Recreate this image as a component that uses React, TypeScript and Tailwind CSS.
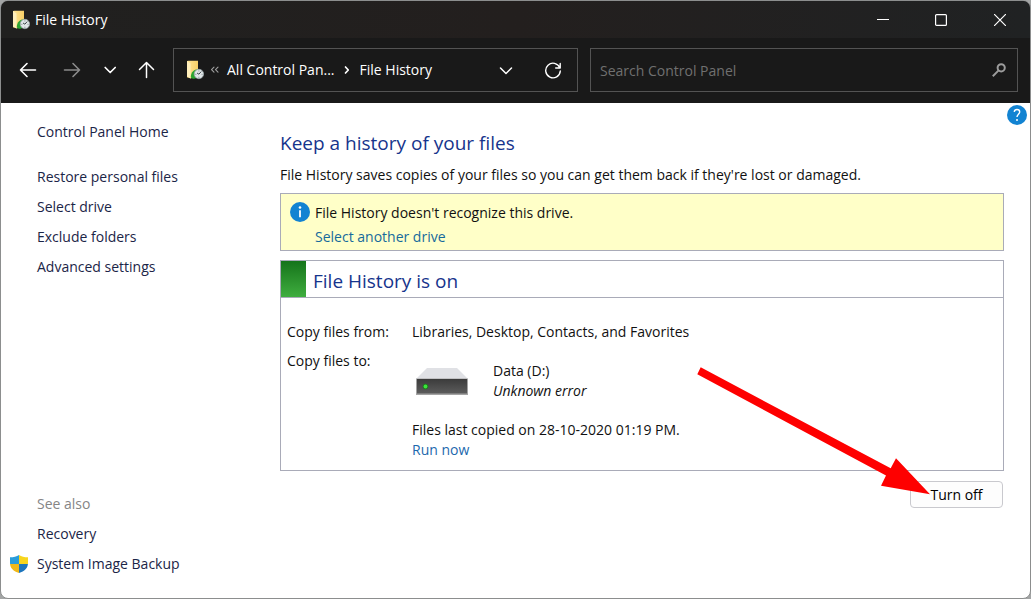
import type { ReactNode } from 'react';

function FolderHistoryIcon() {
  return (
    <svg viewBox="0 0 18 20" className="h-5 w-[18px] shrink-0" aria-hidden="true">
      <defs>
        <linearGradient id="folder" x1="0" y1="0" x2="1" y2="0">
          <stop offset="0" stopColor="#ffe597" />
          <stop offset="1" stopColor="#f7cf66" />
        </linearGradient>
      </defs>
      <path d="M1 1h3v16.500H1z" fill="#f3c95c" />
      <path d="M2.500 .8H12v15L4.500 18.500 1 16.500V1z" fill="url(#folder)" />
      <path d="M1 1 4.500 3.500v15L1 16.500z" fill="#ffefbb" />
      <path d="M4.800 17.200c0-5 2.800-8 7.700-8l-.7 3-2.200 6.400c-2 .4-3.800.1-4.800-1.400z" fill="#2ba52f" />
      <circle cx="12.900" cy="14" r="4.700" fill="#dfe5e7" stroke="#98a3a7" strokeWidth=".8" />
      <path d="M12.900 14.200 15.200 11.600M12.900 14.200 11 13" stroke="#3d464a" strokeWidth="1" fill="none" />
      <path d="M12.900 10.500v.9M12.900 16.800v.9M9.400 14.300h.9M15.600 14.300h.9" stroke="#59666c" strokeWidth=".8" />
    </svg>
  );
}

function ShieldIcon() {
  return (
    <svg viewBox="0 0 18 18" className="h-[18px] w-[18px] shrink-0" aria-hidden="true">
      <defs>
        <clipPath id="shield">
          <path d="M9 0c2.400 1.600 5.400 2.300 9 2.300V8c0 5-3.500 8.500-9 10C3.500 16.500 0 13 0 8V2.300C3.600 2.300 6.600 1.600 9 0z" />
        </clipPath>
      </defs>
      <g clipPath="url(#shield)">
        <path d="M0 0h9v9H0z" fill="#2a9ddb" />
        <path d="M9 0h9v9H9z" fill="#f7d51d" />
        <path d="M0 9h9v9H0z" fill="#f0b91b" />
        <path d="M9 9h9v9H9z" fill="#1c75bd" />
      </g>
    </svg>
  );
}

function DriveIcon() {
  return (
    <svg viewBox="0 0 52 28" className="h-7 w-[52px] shrink-0" aria-hidden="true">
      <defs>
        <linearGradient id="front" x1="0" y1="0" x2="0" y2="1">
          <stop offset="0" stopColor="#3b3b3b" />
          <stop offset="1" stopColor="#5c5c5c" />
        </linearGradient>
      </defs>
      <path d="M11 1h30l11 11H0z" fill="#e0e1e5" />
      <path d="M0 11.500h52V28H0z" fill="#a3a3a3" />
      <path d="M1 12h50v14.500H1z" fill="url(#front)" />
      <circle cx="9.500" cy="19.500" r="2.800" fill="#1d7a1d" />
      <circle cx="9.500" cy="19.500" r="1.900" fill="#3be53b" />
    </svg>
  );
}

function Stroke({ d, className, width = 1.5 }: { d: string; className: string; width?: number }) {
  return (
    <svg viewBox="0 0 18 18" className={className} fill="none" stroke="currentColor" strokeWidth={width} strokeLinecap="round" strokeLinejoin="round" aria-hidden="true">
      <path d={d} />
    </svg>
  );
}

function IconButton({ label, className, children }: { label: string; className: string; children: ReactNode }) {
  return (
    <button type="button" aria-label={label} className={`flex shrink-0 items-center justify-center ${className}`}>
      {children}
    </button>
  );
}

function TitleBar() {
  return (
    <header className="flex h-[37px] shrink-0 items-center bg-[#212121] bg-linear-to-r from-[#20201f] via-[#231f1e] to-[#202223] pl-[11px] text-white">
      <FolderHistoryIcon />
      <h1 className="ml-[5px] flex-1 text-[14px] leading-5">File History</h1>
      <IconButton label="Minimize" className="h-full w-[58px]">
        <svg viewBox="0 0 12 12" className="size-3" stroke="currentColor" aria-hidden="true"><path d="M0 5.500h12" /></svg>
      </IconButton>
      <IconButton label="Maximize" className="h-full w-[58px]">
        <svg viewBox="0 0 12 12" className="size-3" fill="none" stroke="currentColor" strokeWidth="1.200" aria-hidden="true"><rect x=".6" y=".6" width="10.800" height="10.800" rx="1" /></svg>
      </IconButton>
      <IconButton label="Close" className="h-full w-[60px]">
        <svg viewBox="0 0 12 12" className="size-3" stroke="currentColor" strokeWidth="1.200" aria-hidden="true"><path d="m0 0 12 12M12 0 0 12" /></svg>
      </IconButton>
    </header>
  );
}

function Toolbar() {
  return (
    <div className="flex shrink-0 items-center bg-[#191919] px-3 pt-[10px] pb-[11px] text-white">
      <nav aria-label="Navigation" className="flex w-40 shrink-0 items-center">
        <IconButton label="Back" className="h-8 w-[30px]">
          <Stroke d="M16.500 9h-15M8 2.500 1.500 9 8 15.500" className="size-[18px]" width={1.600} />
        </IconButton>
        <IconButton label="Forward" className="ml-[14px] h-8 w-[30px] text-[#8b8b8b]">
          <Stroke d="M1.500 9h15M10 2.500 16.500 9 10 15.500" className="size-[18px]" width={1.600} />
        </IconButton>
        <IconButton label="Recent locations" className="ml-[10px] h-8 w-[26px]">
          <Stroke d="M4.200 6.500 9.200 11.500 14.200 6.500" className="size-[18px]" width={1.700} />
        </IconButton>
        <IconButton label="Up" className="ml-2 h-8 w-[30px]">
          <Stroke d="M9.500 16.500v-15M2.500 8.500l7-7 7 7" className="size-[18px]" />
        </IconButton>
      </nav>
      <div className="flex h-11 w-[405px] shrink items-center border border-[#535353] pl-3 text-[14px] leading-5">
        <FolderHistoryIcon />
        <Stroke d="M8 6.200 5.500 8.700 8 11.200M12 6.200 9.500 8.700 12 11.200" className="ml-[2px] size-[18px] text-[#a0a0a0]" width={1.100} />
        <a href="#all" className="ml-[3px] whitespace-nowrap">All Control Pan...</a>
        <Stroke d="M7.500 6 10.300 9 7.500 12" className="ml-[3px] size-[18px]" width={1.700} />
        <a href="#history" className="ml-[4px] flex-1 whitespace-nowrap">File History</a>
        <IconButton label="Previous locations" className="h-8 w-8">
          <Stroke d="M3.500 7 9 12.500 14.500 7" className="size-[18px]" />
        </IconButton>
        <IconButton label="Refresh" className="mr-2 ml-[15px] h-8 w-8">
          <Stroke d="M15.800 6.800A7.300 7.300 0 1 0 16.300 10M16.200 2.500v4.500h-4.500" className="size-[18px]" width={1.400} />
        </IconButton>
      </div>
      <label className="ml-3 flex h-11 min-w-0 flex-1 items-center border border-[#535353] pr-[11px] pl-[9px]">
        <input type="text" aria-label="Search Control Panel" placeholder="Search Control Panel" className="min-w-0 flex-1 bg-transparent pt-px text-[14px] leading-5 outline-none placeholder:text-[#707070]" />
        <svg viewBox="0 0 14 14" className="size-[14px] text-[#9c9c9c]" fill="none" stroke="currentColor" strokeWidth="2" aria-hidden="true">
          <circle cx="9.200" cy="4.800" r="3.600" />
          <path d="M6.600 7.400.8 13.200" />
        </svg>
      </label>
    </div>
  );
}

function SideLink({ children }: { children: ReactNode }) {
  return <a href="#task" className="block hover:underline">{children}</a>;
}

function Sidebar() {
  return (
    <aside className="flex w-[243px] shrink-0 flex-col pt-[14px] pb-[19px] pl-9 text-[14px] leading-[30px] text-[#1b2547]">
      <SideLink>Control Panel Home</SideLink>
      <nav aria-label="Tasks" className="mt-[15px]">
        <SideLink>Restore personal files</SideLink>
        <SideLink>Select drive</SideLink>
        <SideLink>Exclude folders</SideLink>
        <SideLink>Advanced settings</SideLink>
      </nav>
      <nav aria-label="See also" className="mt-auto">
        <h2 className="text-[#858585]">See also</h2>
        <SideLink>Recovery</SideLink>
        <div className="-ml-[27px] flex items-center gap-[9px]">
          <ShieldIcon />
          <SideLink>System Image Backup</SideLink>
        </div>
      </nav>
    </aside>
  );
}

function Notice() {
  return (
    <section className="mt-2 flex gap-[5px] border border-[#a9abb8] bg-[#ffffc8] pt-[7px] pb-px pl-[9px]">
      <svg viewBox="0 0 20 20" className="mt-px size-5 shrink-0" aria-hidden="true">
        <circle cx="10" cy="10" r="10" fill="#1283d2" />
        <circle cx="10" cy="5.500" r="1.300" fill="#fff" />
        <path d="M10 8.300v6.900" stroke="#fff" strokeWidth="1.800" />
      </svg>
      <div className="leading-6">
        <p>File History doesn't recognize this drive.</p>
        <a href="#select" className="text-[#166a9c] hover:underline">Select another drive</a>
      </div>
    </section>
  );
}

function StatusPanel() {
  return (
    <section className="mt-[9px] border border-[#a9abb8]">
      <div className="flex h-[37px] items-center border-b border-[#a9abb8]">
        <span className="h-full w-[25px] bg-linear-to-b from-[#14741a] to-[#3fae3f]" />
        <h3 className="ml-[7px] pt-1 text-[19px] leading-7 text-[#16348c]">File History is on</h3>
      </div>
      <dl className="grid grid-cols-[125px_1fr] gap-y-[9px] pt-6 pb-[10px] pl-[6px]">
        <dt>Copy files from:</dt>
        <dd>Libraries, Desktop, Contacts, and Favorites</dd>
        <dt>Copy files to:</dt>
        <dd>
          <div className="flex items-center gap-[25px] pt-[10px] pl-1">
            <DriveIcon />
            <div>
              <p>Data (D:)</p>
              <p className="italic">Unknown error</p>
            </div>
          </div>
          <p className="mt-[19px]">Files last copied on 28-10-2020 01:19 PM.</p>
          <a href="#run" className="block text-[#1c68ad] hover:underline">Run now</a>
        </dd>
      </dl>
    </section>
  );
}

function TurnOff() {
  return (
    <div className="relative mt-[10px] mr-px self-end">
      <button type="button" className="block h-[27px] w-[93px] rounded border border-[#c9c9ce] bg-[#fdfdfd] leading-5 text-black">Turn off</button>
      <svg viewBox="0 0 234 130" className="pointer-events-none absolute right-[73px] bottom-3 h-[130px] w-[234px]" aria-hidden="true">
        <path d="M4.700 1.300 194.700 102.300 200 92.300 234 128.300 185 119.700 190 109.500 1.300 8.300z" fill="#fe0000" />
      </svg>
    </div>
  );
}

export default function App() {
  return (
    <div className="min-h-screen bg-[#a3a5a5] font-['Open_Sans','Noto_Sans',sans-serif]">
      <div className="flex min-h-screen flex-col overflow-hidden rounded-lg border border-[#8c8e8e] bg-white">
        <TitleBar />
        <Toolbar />
        <div className="relative flex flex-1">
          <Sidebar />
          <main className="flex min-w-0 flex-1 flex-col pt-[26px] pr-[26px] pl-9 text-[14px] leading-5 text-[#111111]">
            <h2 className="text-[19px] leading-7 text-[#16348c]">Keep a history of your files</h2>
            <p className="mt-2">File History saves copies of your files so you can get them back if they're lost or damaged.</p>
            <Notice />
            <StatusPanel />
            <TurnOff />
          </main>
          <button type="button" aria-label="Help" className="absolute top-[2px] right-[3px] size-5">
            <svg viewBox="0 0 20 20" className="size-5" aria-hidden="true">
              <circle cx="10" cy="10" r="10" fill="#1283d2" />
              <path d="M7.200 6.900c.2-1.600 1.300-2.400 2.800-2.400 1.600 0 2.700.9 2.700 2.400 0 2.100-2.700 2.500-2.700 5" stroke="#fff" strokeWidth="1.400" fill="none" />
              <circle cx="10" cy="14.900" r="1" fill="#fff" />
            </svg>
          </button>
        </div>
      </div>
    </div>
  );
}
